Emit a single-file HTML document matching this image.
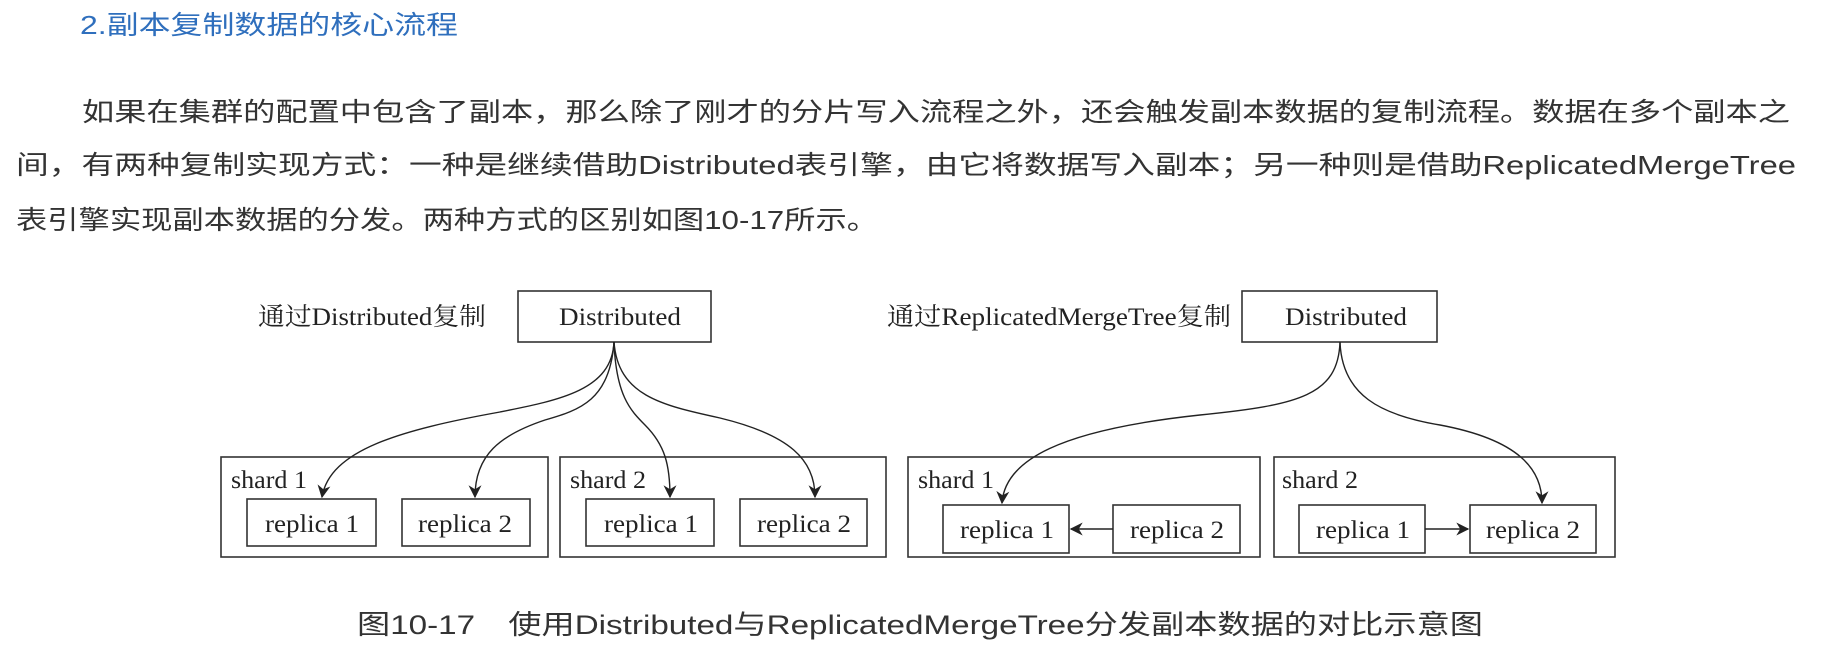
<!DOCTYPE html>
<html><head><meta charset="utf-8"><style>
html,body{margin:0;padding:0;background:#fff;width:1838px;height:650px;overflow:hidden}
svg{display:block}
.cn{font-family:"Liberation Sans","Noto Sans CJK SC",sans-serif;fill:#333}
.sf{font-family:"Liberation Serif","Noto Serif CJK SC",serif;fill:#222}
</style></head><body>
<svg width="1838" height="650" viewBox="0 0 1838 650" xmlns="http://www.w3.org/2000/svg">
<defs>
<marker id="a" viewBox="0 0 10 10" refX="9" refY="5" markerWidth="15" markerHeight="13" orient="auto-start-reverse" markerUnits="userSpaceOnUse"><path d="M0,0 L10,5 L0,10 L3,5 z" fill="#222"/></marker>
</defs>
<text x="80" y="34" class="cn" style="fill:#2f6fbd;font-size:26px" textLength="378" lengthAdjust="spacingAndGlyphs">2.副本复制数据的核心流程</text>
<text x="82" y="121" class="cn" style="font-size:26px" textLength="1708" lengthAdjust="spacingAndGlyphs">如果在集群的配置中包含了副本，那么除了刚才的分片写入流程之外，还会触发副本数据的复制流程。数据在多个副本之</text>
<text x="16" y="174" class="cn" style="font-size:26px" textLength="1780" lengthAdjust="spacingAndGlyphs">间，有两种复制实现方式：一种是继续借助Distributed表引擎，由它将数据写入副本；另一种则是借助ReplicatedMergeTree</text>
<text x="16" y="229" class="cn" style="font-size:26px" textLength="862" lengthAdjust="spacingAndGlyphs">表引擎实现副本数据的分发。两种方式的区别如图10-17所示。</text>

<g fill="none" stroke="#333" stroke-width="1.6">
<rect x="518" y="291" width="193" height="51"/>
<rect x="221" y="457" width="327" height="100"/>
<rect x="560" y="457" width="326" height="100"/>
<rect x="247" y="499" width="129" height="47"/>
<rect x="402" y="499" width="128" height="47"/>
<rect x="586" y="499" width="128" height="47"/>
<rect x="740" y="499" width="127" height="47"/>
<rect x="1242" y="291" width="195" height="51"/>
<rect x="908" y="457" width="352" height="100"/>
<rect x="1274" y="457" width="341" height="100"/>
<rect x="943" y="505" width="126" height="48"/>
<rect x="1113" y="505" width="127" height="48"/>
<rect x="1299" y="505" width="126" height="48"/>
<rect x="1470" y="505" width="126" height="48"/>
</g>
<g fill="none" stroke="#222" stroke-width="1.4" marker-end="url(#a)">
<path d="M614,342 C612,390 560,400 500,412 C400,430 330,450 322,497"/>
<path d="M614,342 C610,400 580,410 545,420 C500,435 475,455 475,497"/>
<path d="M614,342 C616,395 630,410 645,425 C665,445 670,465 670,497"/>
<path d="M614,342 C618,395 660,405 720,418 C790,435 815,460 815,497"/>
<path d="M1340,342 C1338,395 1300,405 1200,415 C1060,430 1005,460 1002,503"/>
<path d="M1340,342 C1342,395 1380,415 1440,425 C1520,440 1542,470 1542,503"/>
<path d="M1113,529 L1071,529"/>
<path d="M1425,529 L1468,529"/>
</g>

<g class="sf" style="font-size:25px">
<text x="258" y="325" textLength="228" lengthAdjust="spacingAndGlyphs">通过Distributed复制</text>
<text x="559" y="325" textLength="122" lengthAdjust="spacingAndGlyphs">Distributed</text>
<text x="887" y="325" textLength="344" lengthAdjust="spacingAndGlyphs">通过ReplicatedMergeTree复制</text>
<text x="1285" y="325" textLength="122" lengthAdjust="spacingAndGlyphs">Distributed</text>
<text x="231" y="488" textLength="76" lengthAdjust="spacingAndGlyphs">shard 1</text>
<text x="570" y="488" textLength="76" lengthAdjust="spacingAndGlyphs">shard 2</text>
<text x="918" y="488" textLength="76" lengthAdjust="spacingAndGlyphs">shard 1</text>
<text x="1282" y="488" textLength="76" lengthAdjust="spacingAndGlyphs">shard 2</text>
<text x="265" y="532" textLength="94" lengthAdjust="spacingAndGlyphs">replica 1</text>
<text x="418" y="532" textLength="94" lengthAdjust="spacingAndGlyphs">replica 2</text>
<text x="604" y="532" textLength="94" lengthAdjust="spacingAndGlyphs">replica 1</text>
<text x="757" y="532" textLength="94" lengthAdjust="spacingAndGlyphs">replica 2</text>
<text x="960" y="538" textLength="94" lengthAdjust="spacingAndGlyphs">replica 1</text>
<text x="1130" y="538" textLength="94" lengthAdjust="spacingAndGlyphs">replica 2</text>
<text x="1316" y="538" textLength="94" lengthAdjust="spacingAndGlyphs">replica 1</text>
<text x="1486" y="538" textLength="94" lengthAdjust="spacingAndGlyphs">replica 2</text>
</g>
<text x="357" y="634" class="cn" style="font-size:27px" textLength="1126" lengthAdjust="spacingAndGlyphs">图10-17　使用Distributed与ReplicatedMergeTree分发副本数据的对比示意图</text>
</svg>
</body></html>
